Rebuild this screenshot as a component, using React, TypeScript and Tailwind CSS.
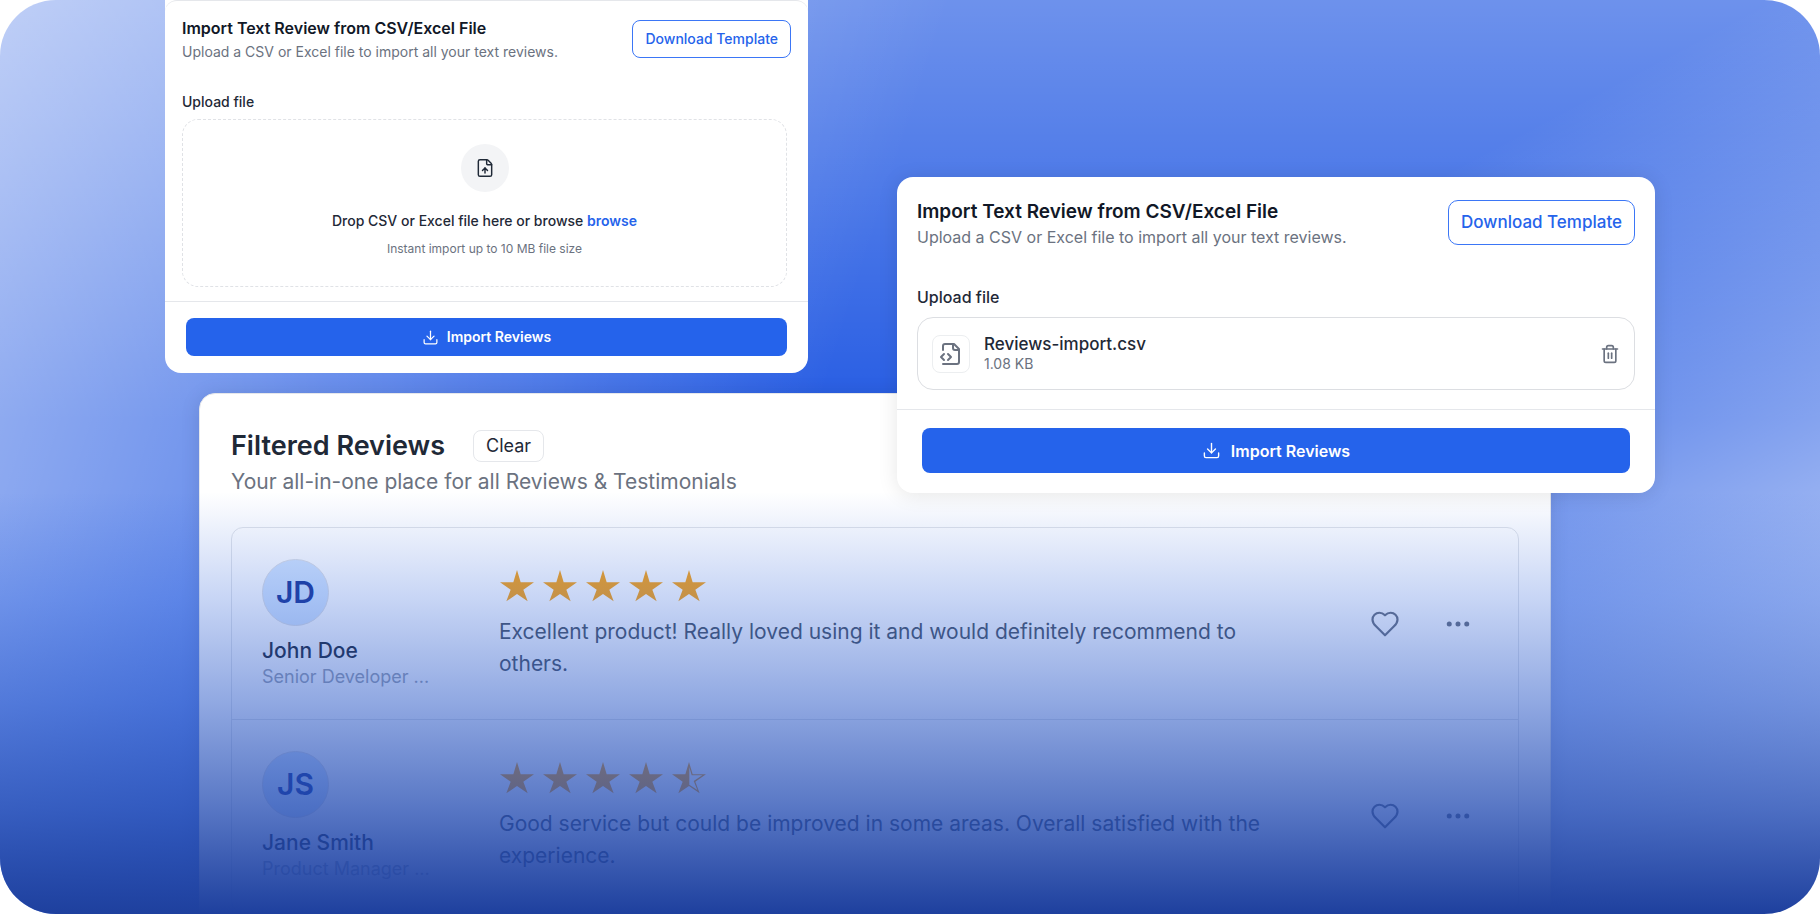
import type { ReactNode } from "react";
import { Download, Ellipsis, FileUp, Trash2 } from "lucide-react";

const reviews = [
  {
    initials: "JD",
    name: "John Doe",
    role: "Senior Developer ...",
    rating: 5,
    text: "Excellent product! Really loved using it and would definitely recommend to others.",
  },
  {
    initials: "JS",
    name: "Jane Smith",
    role: "Product Manager ...",
    rating: 4.5,
    text: "Good service but could be improved in some areas. Overall satisfied with the experience.",
  },
];

function FileCodeIcon() {
  return (
    <svg className="h-6 w-6" viewBox="0 0 24 24" fill="none" stroke="currentColor" strokeWidth={2} strokeLinecap="round" strokeLinejoin="round">
      <path d="M4 22h14a2 2 0 0 0 2-2V7l-5-5H6a2 2 0 0 0-2 2v4" />
      <path d="M14 2v4a2 2 0 0 0 2 2h4" />
      <path d="m5 12-3 3 3 3" />
      <path d="m9 18 3-3-3-3" />
    </svg>
  );
}

function HeartIcon() {
  return (
    <svg className="h-[30px] w-[30px]" viewBox="0 0 24 24" fill="none" stroke="currentColor" strokeWidth={1.75} strokeLinecap="round" strokeLinejoin="round">
      <path d="M19 14c1.49-1.46 3-3.21 3-5.5A5.5 5.5 0 0 0 16.5 3c-1.76 0-3 .5-4.5 2-1.5-1.5-2.74-2-4.5-2A5.5 5.5 0 0 0 2 8.5c0 2.3 1.5 4.05 3 5.5l7 7Z" />
    </svg>
  );
}

function Star({ half = false }: { half?: boolean }) {
  return (
    <svg className="h-[35px] w-[35px]" viewBox="-3 1 105 105" fill="currentColor">
      {half ? (
        <path
          fillRule="evenodd"
          d="M51 4 62 41H102L70 63 83 98 51 76 19 98 32 63 0 41H40ZM52 20V72L76 88 65 61 91 44H59Z"
        />
      ) : (
        <path d="M51 4 62 41H102L70 63 83 98 51 76 19 98 32 63 0 41H40Z" />
      )}
    </svg>
  );
}

function Rating({ value }: { value: number }) {
  return (
    <div className="flex gap-2 text-[#fba418]" role="img" aria-label={`${value} out of 5`}>
      {[1, 2, 3, 4, 5].map((n) => (
        <Star key={n} half={value < n} />
      ))}
    </div>
  );
}

function UploadCard() {
  return (
    <section className="relative w-[643px] rounded-b-2xl bg-white">
      <div className="rounded-t-xl border-t border-[#e5e7eb] px-[17px] pt-[17px]">
        <div className="flex items-start justify-between">
          <div>
            <h2 className="text-base leading-5 font-semibold text-[#111827]">Import Text Review from CSV/Excel File</h2>
            <p className="mt-1 text-sm text-[#6b7280]">Upload a CSV or Excel file to import all your text reviews.</p>
          </div>
          <button className="mt-0.5 h-[38px] rounded-lg border border-[#3b76f6] px-3 text-sm font-medium text-[#2563eb]">
            Download Template
          </button>
        </div>

        <label htmlFor="drop-file" className="mt-[30px] block text-sm font-medium text-[#1f2937]">
          Upload file
        </label>
        <div className="mt-[7px] mr-1 flex h-[168px] flex-col items-center rounded-2xl border border-dashed border-[#e0e2e6] pt-6">
          <div className="flex h-12 w-12 items-center justify-center rounded-full bg-[#f3f4f6] text-[#1f2937]">
            <FileUp size={20} strokeWidth={1.75} />
          </div>
          <p className="mt-[19px] text-sm font-medium text-[#1f2937]">
            Drop CSV or Excel file here or browse{" "}
            <label htmlFor="drop-file" className="font-semibold text-[#2563eb]">browse</label>
          </p>
          <p className="mt-2.5 text-xs text-[#6b7280]">Instant import up to 10 MB file size</p>
          <input id="drop-file" type="file" className="sr-only" />
        </div>
      </div>

      <div className="mt-3.5 border-t border-[#e5e7eb] px-[21px] pt-4 pb-[17px]">
        <button className="flex h-[38px] w-full items-center justify-center gap-2 rounded-lg bg-[#2563eb] text-sm font-semibold text-white">
          <Download size={17} strokeWidth={1.75} />
          Import Reviews
        </button>
      </div>
    </section>
  );
}

function SelectedFileCard() {
  return (
    <section className="absolute top-[177px] right-[165px] w-[758px] rounded-2xl bg-white shadow-[0_2px_20px_rgba(0,0,0,0.1)]">
      <div className="px-5 pt-[23px]">
        <div className="flex items-start justify-between">
          <div>
            <h2 className="text-[19px] leading-6 font-semibold text-[#111827]">Import Text Review from CSV/Excel File</h2>
            <p className="mt-px text-base text-[#6b7280]">Upload a CSV or Excel file to import all your text reviews.</p>
          </div>
          <button className="h-[45px] rounded-[10px] border border-[#3b76f6] px-3 text-[17px] font-medium text-[#2563eb]">
            Download Template
          </button>
        </div>

        <h3 className="mt-9 text-base font-medium text-[#1f2937]">Upload file</h3>
        <div className="mt-2 flex h-[73px] items-center rounded-2xl border border-[#dcdee2] px-3.5">
          <div className="flex h-[38px] w-[38px] items-center justify-center rounded-lg border border-[#eceef0] text-[#6b7280]">
            <FileCodeIcon />
          </div>
          <div className="ml-3.5">
            <p className="text-[17px] leading-5 font-medium text-[#1f2937]">Reviews-import.csv</p>
            <p className="text-sm text-[#6b7280]">1.08 KB</p>
          </div>
          <button aria-label="Delete file" className="ml-auto text-[#6b7280]">
            <Trash2 size={20} />
          </button>
        </div>
      </div>

      <div className="mt-[19px] border-t border-[#e5e7eb] px-[25px] pt-[18px] pb-5">
        <button className="flex h-[45px] w-full items-center justify-center gap-2.5 rounded-lg bg-[#2563eb] text-base font-semibold text-white">
          <Download size={19} strokeWidth={1.75} />
          Import Reviews
        </button>
      </div>
    </section>
  );
}

function IconButton({ label, children }: { label: string; children: ReactNode }) {
  return (
    <button aria-label={label} className="text-[#6b7280]">
      {children}
    </button>
  );
}

function ReviewsCard() {
  return (
    <section className="mt-5 mr-[104px] ml-[34px] rounded-t-2xl border border-[#e5e7eb] bg-white px-[31px] pt-9 shadow-[0_2px_20px_rgba(0,0,0,0.1)]">
      <div className="flex items-center gap-7">
        <h1 className="text-[27px] leading-8 font-semibold text-[#1f2937]">Filtered Reviews</h1>
        <button className="h-8 rounded-lg border border-[#e5e7eb] px-3 text-lg leading-6 text-[#1f2937]">Clear</button>
      </div>
      <p className="mt-1 text-[21px] leading-8 text-[#6b7280]">Your all-in-one place for all Reviews &amp; Testimonials</p>

      <ul className="mt-[29px] divide-y divide-[#e1e4e9] rounded-xl border border-[#e1e4e9]">
        {reviews.map((review) => (
          <li key={review.name} className="flex h-48 pt-[31px] pr-[45px] pl-[30px]">
            <div className="w-[237px] shrink-0">
              <div className="flex h-[67px] w-[67px] items-center justify-center rounded-full border border-[#dcdfe5] bg-[#d3e5fe] text-[30px] font-semibold text-[#1e3a9a]">
                {review.initials}
              </div>
              <p className="mt-[11px] text-[21px] leading-7 font-medium text-[#1f2937]">{review.name}</p>
              <p className="text-lg leading-6 text-[#9ca3af]">{review.role}</p>
            </div>
            <div className="w-[800px] shrink-0 pt-2.5">
              <Rating value={review.rating} />
              <p className="mt-3 text-[21px] leading-8 text-[#4b5563]">{review.text}</p>
            </div>
            <div className="ml-auto flex items-center gap-[43px] self-start pt-[50px]">
              <IconButton label="Add to favourites">
                <HeartIcon />
              </IconButton>
              <IconButton label="More actions">
                <Ellipsis size={30} />
              </IconButton>
            </div>
          </li>
        ))}
      </ul>
    </section>
  );
}

export default function App() {
  return (
    <main className="relative h-screen overflow-hidden rounded-[56px] bg-[#265ce3] bg-[linear-gradient(152deg,transparent_50%,rgba(255,255,255,0.92)_100%),linear-gradient(108deg,rgba(255,255,255,0.56)_0%,transparent_45%),linear-gradient(180deg,rgba(255,255,255,0.33)_0px,transparent_420px)] px-[165px] font-['Inter',sans-serif]">
      <UploadCard />
      <ReviewsCard />
      {/* Fade the lower half into the dark blue */}
      <div className="pointer-events-none absolute inset-x-0 top-[492px] bottom-0 bg-[linear-gradient(180deg,rgba(37,99,235,0)_0%,rgba(35,90,216,0.25)_25%,rgba(34,82,197,0.5)_50%,rgba(32,73,177,0.75)_75%,#1e409e_100%)]" />
      <SelectedFileCard />
    </main>
  );
}
